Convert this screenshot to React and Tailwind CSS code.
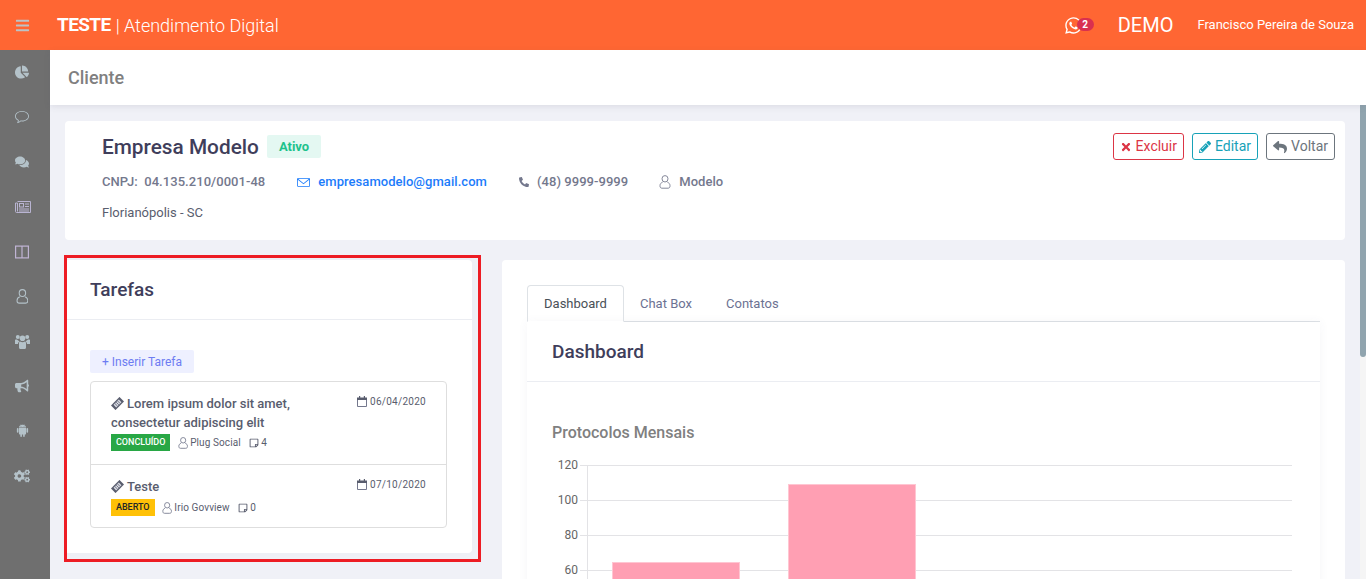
import React from "react";
import { FaBars, FaChartPie, FaComments, FaBullhorn, FaCogs, FaTimes, FaPencilAlt, FaReply, FaPhoneAlt, FaWhatsapp, FaRegStickyNote } from "react-icons/fa";
import { AiFillAndroid } from "react-icons/ai";
import { SlBubble, SlEnvolope } from "react-icons/sl";

function Columns(props) {
  return (
    <svg viewBox="0 0 14 14" width="14" height="14" fill="none" stroke="currentColor" strokeWidth="1.2" {...props}>
      <rect x="0.6" y="1.1" width="12.8" height="11.8" />
      <path d="M7 1v12" />
    </svg>
  );
}

function Newspaper({ className = "" }) {
  return (
    <svg viewBox="0 0 16 12" width="16" height="12" fill="none" stroke="currentColor" strokeWidth="1" className={className}>
      <path d="M2.5 0.5H15.5V11.5H1.5C0.9 11.5 0.5 11 0.5 10.5V2H2.5V10.5" />
      <rect x="4.5" y="2.5" width="4" height="3.5" />
      <path d="M10 3H14M10 5.5H14M4 8H14M4 10H14" />
    </svg>
  );
}

function Users({ className = "" }) {
  return (
    <svg viewBox="0 0 15 15" width="15" height="15" fill="currentColor" className={className}>
      <circle cx="2.8" cy="3" r="2" />
      <circle cx="12.2" cy="3" r="2" />
      <circle cx="7.5" cy="4.2" r="2.8" />
      <path d="M0 6C0.5 5.5 1 5.4 2 5.6C2.8 6.4 3.5 7 4.4 7.2C3.5 8 3 9 3 10H0Z" />
      <path d="M15 6C14.5 5.5 14 5.4 13 5.6C12.2 6.4 11.5 7 10.6 7.2C11.5 8 12 9 12 10H15Z" />
      <path d="M4 9C4 8 4.5 7.6 5 7.4C6.5 8.4 8.5 8.4 10 7.4C10.5 7.6 11 8 11 9V13.5C11 14.4 10.5 15 9.5 15H5.5C4.5 15 4 14.4 4 13.5Z" />
    </svg>
  );
}

function Ticket({ className = "" }) {
  return (
    <svg viewBox="0 0 14 14" width="13" height="13" className={`inline-block align-[-2px] ${className}`}>
      <g transform="rotate(-45 7 7)">
        <rect x="0.5" y="3.5" width="13" height="7" fill="#595d6e" />
        <rect x="3" y="5" width="8" height="4" fill="#d7d9e2" />
        <path d="M5 5V9M7 5V9M9 5V9" stroke="#595d6e" strokeWidth="0.8" />
      </g>
    </svg>
  );
}

function User({ size = 12, className = "" }) {
  return (
    <svg viewBox="0 0 12 14" width={(size * 12) / 14} height={size} fill="none" stroke="currentColor" strokeWidth="1" className={className}>
      <ellipse cx="6" cy="3.8" rx="3" ry="3.2" />
      <path d="M3.6 7.2C2 7.8 1 9 1 10.6V11.2C1 12.4 1.8 13.2 3 13.2H9C10.2 13.2 11 12.4 11 11.2V10.6C11 9 10 7.8 8.4 7.2" />
    </svg>
  );
}

function Calendar({ className = "" }) {
  return (
    <svg viewBox="0 0 10 11" width="10" height="11" className={className}>
      <path d="M0.5 3.5H9.5V10.5H0.5Z" fill="none" stroke="#74788d" strokeWidth="1" />
      <path d="M0 1.5H10V4H0Z" fill="#595d6e" />
      <path d="M2 0H3.2V2H2ZM6.8 0H8V2H6.8Z" fill="#595d6e" />
    </svg>
  );
}

const sideIcons = [
  <FaChartPie size={14} />,
  <SlBubble size={14} />,
  <FaComments size={14} />,
  <Newspaper className="ml-[1px] text-[#b9b4d2]" />,
  <Columns className="text-[#c0b4d4]" />,
  <User size={15} />,
  <Users />,
  <FaBullhorn size={14} />,
  <AiFillAndroid size={15} />,
  <FaCogs size={16} />,
];

function Task({ title, second, date, status, statusCls, who, notes, metaCls, rowCls }) {
  return (
    <div className={`flex justify-between pl-5 pr-5 pt-[12px] ${rowCls}`}>
      <div>
        <div className="text-[13px] leading-[19px] font-medium text-[#595d6e] w-[215px]">
          <Ticket className="mr-[3px]" />
          {title}
          {second && <br />}
          {second}
        </div>
        <div className={`flex items-center text-[10px] text-[#595d6e] tracking-[0.1px] ${metaCls}`}>
          <span className={`h-[17px] px-[5px] leading-[17px] text-[9px] font-medium tracking-[-0.02px] ${statusCls}`}>{status}</span>
          <User size={12} className="ml-[7.5px] mr-[2px] text-[#74788d]" />
          <span>{who}</span>
          <FaRegStickyNote size={10} className="ml-[8px] mr-[2.5px]" />
          <span>{notes}</span>
        </div>
      </div>
      <div className="flex items-center h-[12px] text-[10px] text-[#595d6e] tracking-[0.28px] mt-[1px]">
        <Calendar className="mr-[3px]" />
        {date}
      </div>
    </div>
  );
}

function Chart() {
  const ys = [[120, 22], [100, 57], [80, 92], [60, 127]];
  return (
    <svg width="768" height="170" className="block" style={{ fontFamily: "Roboto, sans-serif" }}>
      {ys.map(([v, y]) => (
        <g key={v}>
          <line x1="46" x2="758" y1={y + 0.5} y2={y + 0.5} stroke="#e3e3e6" />
          <text x="44" y={y + 4} textAnchor="end" fontSize="12" fill="#666666">{v}</text>
        </g>
      ))}
      <line x1="53.5" x2="53.5" y1="22" y2="170" stroke="#e3e3e6" />
      <rect x="78.5" y="119.5" width="127" height="60" fill="#ff9fb3" stroke="#ffc6d2" />
      <rect x="254.5" y="41.5" width="127" height="140" fill="#ff9fb3" stroke="#ffc6d2" />
    </svg>
  );
}

export default function App() {
  return (
    <div className="w-[1366px] h-[579px] overflow-hidden flex flex-col bg-[#f0f1f7] text-[#595d6e]" style={{ fontFamily: "Roboto, sans-serif" }}>
      <header className="h-[50px] shrink-0 bg-[#ff6633] flex items-center text-white">
        <div className="w-[50px] pr-[6px] flex justify-center text-[#bcc3c6]"><FaBars size={15} /></div>
        <div className="ml-[7px] flex items-center text-[18px]">
          <span className="font-bold text-[19px] tracking-[-0.6px]">TESTE</span>
          <span className="font-light ml-[5px]">| Atendimento Digital</span>
        </div>
        <div className="ml-auto flex items-center">
          <div className="relative mr-[35px]">
            <FaWhatsapp size={19} />
            <span className="absolute left-[13px] top-[2px] h-[13px] w-[17px] rounded-full bg-[#d9304f] text-[10px] leading-[13px] font-bold text-center">2</span>
          </div>
          <span className="text-[20px]">DEMO</span>
          <span className="ml-[24px] mr-[12px] text-[13px]">Francisco Pereira de Souza</span>
        </div>
      </header>

      <div className="flex flex-1 min-h-0">
        <aside className="w-[50px] shrink-0 bg-[#6f6f6f] text-[#b4c2c9] flex flex-col items-center">
          {sideIcons.map((icon, i) => (
            <div key={i} className="h-[44.8px] w-full pr-[6px] flex items-center justify-center">{icon}</div>
          ))}
        </aside>

        <main className="relative flex-1 min-w-0 flex flex-col">
          <div className="h-[55px] shrink-0 bg-white flex items-center pl-[18px] text-[18px] font-medium text-[#808080] shadow-[0_2px_6px_rgba(80,80,110,0.12)] z-10">Cliente</div>

          <div className="pl-[15px] pr-[21px] pt-[16px]">
            <section className="h-[119px] bg-white rounded-[4px] pl-[37px] pr-[10px] flex justify-between">
              <div>
                <div className="flex items-center pt-[13px]">
                  <span className="text-[20.8px] leading-[26px] font-medium text-[#3f3e5b]">Empresa Modelo</span>
                  <span className="ml-[8px] -mt-[1px] h-[23px] px-[12px] rounded-[2px] bg-[#e4f8f2] text-[#1dc28c] text-[13px] leading-[23px] font-bold">Ativo</span>
                </div>
                <div className="flex items-center mt-[13px] text-[13px] leading-[18px] font-medium text-[#74788d] tracking-[0.05px]">
                  <span>CNPJ:&nbsp; 04.135.210/0001-48</span>
                  <SlEnvolope size={13} className="ml-[32px] text-[#1c7cfb]" />
                  <span className="ml-[8px] text-[#1c7cfb]">empresamodelo@gmail.com</span>
                  <FaPhoneAlt size={10} className="ml-[32px]" />
                  <span className="ml-[8px]">(48) 9999-9999</span>
                  <User size={14} className="ml-[31px] text-[#85889a]" />
                  <span className="ml-[8px]">Modelo</span>
                </div>
                <div className="mt-[13px] text-[13px] leading-[18px] text-[#595d6e]">Florianópolis - SC</div>
              </div>
              <div className="flex items-start gap-[8px] pt-[12px]">
                <button className="h-[27px] px-[6px] flex items-center border border-[#dc3545] rounded-[3px] text-[#dc3545] text-[14px]"><FaTimes size={12} className="mr-[4px]" />Excluir</button>
                <button className="h-[27px] px-[6px] flex items-center border border-[#17a2b8] rounded-[3px] text-[#17a2b8] text-[14px]"><FaPencilAlt size={12} className="mr-[4px]" />Editar</button>
                <button className="h-[27px] px-[6px] flex items-center border border-[#6c757d] rounded-[3px] text-[#6c757d] text-[14px]"><FaReply size={14} className="mr-[4px]" />Voltar</button>
              </div>
            </section>

            <div className="flex mt-[20px] gap-[30px]">
              <div className="relative w-[407px] shrink-0">
                <section className="h-[293px] bg-white rounded-[4px] shadow-[0_0_10px_rgba(80,80,110,0.03)]">
                  <div className="h-[60px] border-b border-[#ebedf2] pl-[25px] pt-[2px] flex items-center text-[19px] font-medium text-[#3f3e5b]">Tarefas</div>
                  <div className="px-[25px] pt-[30px]">
                    <button className="block h-[23px] px-[12px] rounded-[2px] bg-[#eef0ff] text-[#6d7cf2] text-[12px]">+ Inserir Tarefa</button>
                    <div className="mt-[8px] border border-[#dedede] rounded-[4px] divide-y divide-[#dedede]">
                      <Task title="Lorem ipsum dolor sit amet," second="consectetur adipiscing elit" date="06/04/2020" status="CONCLUÍDO" statusCls="bg-[#28a745] text-white" who="Plug Social" notes="4" metaCls="mt-[2px]" rowCls="pb-[13px]" />
                      <Task title="Teste" date="07/10/2020" status="ABERTO" statusCls="bg-[#ffc107] text-[#212529]" who="Irio Govview" notes="0" metaCls="mt-[3px]" rowCls="pb-[11px]" />
                    </div>
                  </div>
                </section>
                <div className="absolute -left-px -top-[5px] w-[417px] h-[307px] border-[3px] border-[#ed1c24] pointer-events-none" />
              </div>

              <section className="flex-1 min-w-0 bg-white rounded-[4px] px-[25px] pt-[25px] h-[400px]">
                <div className="h-[37px] flex border-b border-[#dee2e6] text-[13px]">
                  <div className="h-[37px] w-[97px] border border-[#dee2e6] border-b-white rounded-t-[4px] flex items-center justify-center text-[#495057]">Dashboard</div>
                  <div className="h-[37px] px-[17px] -ml-px flex items-center text-[#6c7293]">Chat Box</div>
                  <div className="h-[37px] px-[17px] flex items-center text-[#6c7293]">Contatos</div>
                </div>
                <div className="shadow-[0_0_10px_rgba(80,80,110,0.05)] h-[300px]">
                  <div className="h-[60px] border-b border-[#ebedf2] pl-[25px] pt-[2px] flex items-center text-[19px] font-medium text-[#3f3e5b]">Dashboard</div>
                  <div className="px-[25px] pt-[41px]">
                    <div className="text-[16px] leading-[20px] font-medium text-[#808080]">Protocolos Mensais</div>
                    <div className="-ml-[18px]"><Chart /></div>
                  </div>
                </div>
              </section>
            </div>
          </div>

          <div className="absolute right-0 top-[55px] bottom-0 w-[6px] bg-[#f5f5f5]">
            <div className="h-[252px] rounded-b-[3px] bg-[#90a4ae]" />
          </div>
        </main>
      </div>
    </div>
  );
}
